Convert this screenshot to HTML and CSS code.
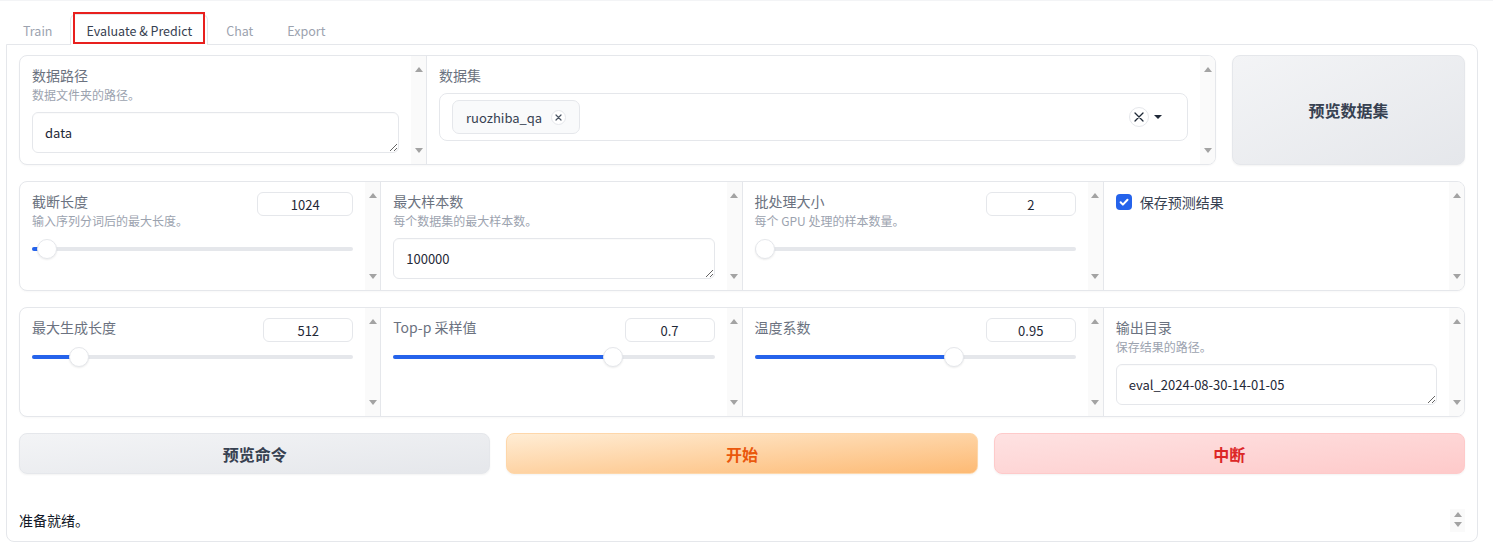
FILE: index.html
```html
<!doctype html>
<html lang="zh">
<head>
    <meta charset="UTF-8">
    <title>Evaluate &amp; Predict</title>
    <link rel="stylesheet" href="styles.css">
</head>
<body>
<div class="app">
    <div class="tabs">
        <button class="tab">Train</button>
        <button class="tab tab_selected">Evaluate &amp; Predict<span class="tab_mark"></span></button>
        <button class="tab">Chat</button>
        <button class="tab">Export</button>
    </div>
    <div class="panel">
        <div class="row">
            <div class="group">
                <div class="cell cell_path">
                    <div class="cell_body">
                        <span class="label">数据路径</span>
                        <span class="info">数据文件夹的路径。</span>
                        <textarea class="textbox" rows="1">data</textarea>
                    </div>
                    <div class="scroll"><span class="arrow_up"></span><span class="arrow_down"></span></div>
                </div>
                <div class="cell">
                    <div class="cell_body">
                        <span class="label">数据集</span>
                        <div class="dropdown">
                            <span class="token">ruozhiba_qa
                                <span class="token_remove">
                                    <svg width="7" height="7" viewBox="0 0 7 7"><path d="M1 1L6 6M6 1L1 6" stroke="#4b5563" stroke-width="1.2" stroke-linecap="round"/></svg>
                                </span>
                            </span>
                            <span class="dropdown_icons">
                                <span class="dropdown_clear">
                                    <svg width="10" height="10" viewBox="0 0 10 10"><path d="M1 1L9 9M9 1L1 9" stroke="#1f2937" stroke-width="1.3" stroke-linecap="round"/></svg>
                                </span>
                                <span class="dropdown_caret"></span>
                            </span>
                        </div>
                    </div>
                    <div class="scroll"><span class="arrow_up"></span><span class="arrow_down"></span></div>
                </div>
            </div>
            <button class="btn btn_secondary btn_preview">预览数据集</button>
        </div>

        <div class="row">
            <div class="group group_full">
                <div class="cell">
                    <div class="cell_body">
                        <div class="slider_head">
                            <div>
                                <span class="label">截断长度</span>
                                <span class="info">输入序列分词后的最大长度。</span>
                            </div>
                            <input class="num num_wide" type="number" value="1024">
                        </div>
                        <div class="range range_info">
                            <div class="track">
                                <div class="fill" style="width: 14.7px"></div>
                                <div class="thumb" style="left: 14.7px"></div>
                            </div>
                        </div>
                    </div>
                    <div class="scroll"><span class="arrow_up"></span><span class="arrow_down"></span></div>
                </div>
                <div class="cell">
                    <div class="cell_body">
                        <span class="label">最大样本数</span>
                        <span class="info">每个数据集的最大样本数。</span>
                        <textarea class="textbox" rows="1">100000</textarea>
                    </div>
                    <div class="scroll"><span class="arrow_up"></span><span class="arrow_down"></span></div>
                </div>
                <div class="cell">
                    <div class="cell_body">
                        <div class="slider_head">
                            <div>
                                <span class="label">批处理大小</span>
                                <span class="info">每个 GPU 处理的样本数量。</span>
                            </div>
                            <input class="num" type="number" value="2">
                        </div>
                        <div class="range range_info">
                            <div class="track">
                                <div class="fill" style="width: 0"></div>
                                <div class="thumb" style="left: 10px"></div>
                            </div>
                        </div>
                    </div>
                    <div class="scroll"><span class="arrow_up"></span><span class="arrow_down"></span></div>
                </div>
                <div class="cell">
                    <div class="cell_body">
                        <label class="check">
                            <span class="check_box">
                                <svg width="16" height="16" viewBox="0 0 16 16"><path d="M4.6 8.3l2.3 2.3 4.6-4.9" fill="none" stroke="#fff" stroke-width="2" stroke-linecap="round" stroke-linejoin="round"/></svg>
                            </span>
                            保存预测结果
                        </label>
                    </div>
                    <div class="scroll"><span class="arrow_up"></span><span class="arrow_down"></span></div>
                </div>
            </div>
        </div>

        <div class="row">
            <div class="group group_full">
                <div class="cell">
                    <div class="cell_body">
                        <div class="slider_head">
                            <span class="label">最大生成长度</span>
                            <input class="num" type="number" value="512">
                        </div>
                        <div class="range">
                            <div class="track">
                                <div class="fill" style="width: 47px"></div>
                                <div class="thumb" style="left: 47px"></div>
                            </div>
                        </div>
                    </div>
                    <div class="scroll"><span class="arrow_up"></span><span class="arrow_down"></span></div>
                </div>
                <div class="cell">
                    <div class="cell_body">
                        <div class="slider_head">
                            <span class="label">Top-p 采样值</span>
                            <input class="num" type="number" value="0.7">
                        </div>
                        <div class="range">
                            <div class="track">
                                <div class="fill" style="width: 219.8px"></div>
                                <div class="thumb" style="left: 219.8px"></div>
                            </div>
                        </div>
                    </div>
                    <div class="scroll"><span class="arrow_up"></span><span class="arrow_down"></span></div>
                </div>
                <div class="cell">
                    <div class="cell_body">
                        <div class="slider_head">
                            <span class="label">温度系数</span>
                            <input class="num" type="number" value="0.95">
                        </div>
                        <div class="range">
                            <div class="track">
                                <div class="fill" style="width: 199.9px"></div>
                                <div class="thumb" style="left: 199.9px"></div>
                            </div>
                        </div>
                    </div>
                    <div class="scroll"><span class="arrow_up"></span><span class="arrow_down"></span></div>
                </div>
                <div class="cell">
                    <div class="cell_body">
                        <span class="label">输出目录</span>
                        <span class="info">保存结果的路径。</span>
                        <textarea class="textbox" rows="1">eval_2024-08-30-14-01-05</textarea>
                    </div>
                    <div class="scroll"><span class="arrow_up"></span><span class="arrow_down"></span></div>
                </div>
            </div>
        </div>

        <div class="row btn_row">
            <button class="btn btn_secondary">预览命令</button>
            <button class="btn btn_primary">开始</button>
            <button class="btn btn_stop">中断</button>
        </div>

        <div class="status">
            <span class="status_text">准备就绪。</span>
            <div class="scroll scroll_small"><span class="arrow_up"></span><span class="arrow_down"></span></div>
        </div>
    </div>
</div>
</body>
</html>
```

FILE: styles.css
```css
* {
    box-sizing: border-box;
    margin: 0;
    padding: 0;
}

body {
    font-family: "Noto Sans CJK SC", "Noto Sans", sans-serif;
    font-size: 14px;
    color: #1f2937;
    background-color: #fff;
}

.app {
    border-top: 1px solid #f3f4f6;
    padding: 13px 15px 0 6px;
}

/* tabs */
.tabs {
    display: flex;
    gap: 2px;
    padding-left: 1px;
    margin-bottom: -1px;
}

.tab {
    position: relative;
    height: 31px;
    padding: 0 15px;
    border: 1px solid transparent;
    border-bottom: none;
    border-radius: 6px 6px 0 0;
    background: none;
    font: inherit;
    font-size: 12.5px;
    line-height: 29px;
    color: #9ca3af;
}

.tab_selected {
    z-index: 1;
    border-color: #e5e7eb;
    background-color: #fff;
    color: #374151;
}

.tab_mark {
    position: absolute;
    left: 2px;
    right: 2px;
    top: -3px;
    bottom: 1px;
    border: 2px solid #e8201e;
    pointer-events: none;
}

.panel {
    display: flex;
    flex-direction: column;
    gap: 16px;
    border: 1px solid #e5e7eb;
    border-radius: 0 8px 8px 8px;
    padding: 10px 12px 9px;
}

.row {
    display: flex;
    gap: 16px;
}

/* grouped blocks */
.group {
    flex: 1;
    display: flex;
    border: 1px solid #e5e7eb;
    border-radius: 8px;
    overflow: hidden;
    background-color: #fff;
    box-shadow: 0 1px 2px rgba(0, 0, 0, 0.03);
}

.cell {
    flex: 1;
    display: flex;
    min-width: 0;
}

.cell + .cell {
    border-left: 1px solid #e5e7eb;
}

.cell_path {
    flex: 0 0 406px;
}

.cell_body {
    flex: 1;
    min-width: 0;
    padding: 9px 12px 11px;
}

.scroll {
    flex: 0 0 15px;
    display: flex;
    flex-direction: column;
    justify-content: space-between;
    align-items: center;
    padding: 11px 0;
    background-color: #fafafa;
}

.arrow_up {
    width: 0;
    height: 0;
    border-left: 4px solid transparent;
    border-right: 4px solid transparent;
    border-bottom: 5px solid #a3a3a3;
}

.arrow_down {
    width: 0;
    height: 0;
    border-left: 4px solid transparent;
    border-right: 4px solid transparent;
    border-top: 5px solid #a3a3a3;
}

.label {
    display: block;
    line-height: 20px;
    color: #6b7280;
}

.info {
    display: block;
    margin-top: 1px;
    font-size: 12px;
    line-height: 18px;
    color: #9ca3af;
}

.textbox {
    display: block;
    width: 100%;
    height: 41px;
    margin-top: 8px;
    padding: 10px 12px;
    border: 1px solid #e5e7eb;
    border-radius: 6px;
    font: inherit;
    font-size: 13px;
    line-height: 20px;
    color: #1f2937;
    resize: vertical;
    overflow: hidden;
    outline: none;
    box-shadow: inset 0 1px 1px rgba(0, 0, 0, 0.02);
}

/* dropdown */
.dropdown {
    display: flex;
    justify-content: space-between;
    align-items: center;
    height: 48px;
    margin-top: 8px;
    padding: 6px 25px 6px 12px;
    border: 1px solid #e5e7eb;
    border-radius: 8px;
}

.token {
    display: inline-flex;
    align-items: center;
    gap: 9px;
    height: 34px;
    padding: 0 13px;
    border: 1px solid #e5e7eb;
    border-radius: 7px;
    background-color: #f9fafb;
    font-size: 13px;
    color: #374151;
}

.token_remove {
    display: flex;
    justify-content: center;
    align-items: center;
    width: 15px;
    height: 15px;
    border: 1px solid #e5e7eb;
    border-radius: 50%;
    background-color: #fff;
}

.dropdown_icons {
    display: flex;
    align-items: center;
    gap: 5px;
}

.dropdown_clear {
    display: flex;
    justify-content: center;
    align-items: center;
    width: 20px;
    height: 20px;
    border: 1px solid #e5e7eb;
    border-radius: 50%;
}

.dropdown_caret {
    width: 0;
    height: 0;
    border-left: 4px solid transparent;
    border-right: 4px solid transparent;
    border-top: 4px solid #1f2937;
}

/* sliders */
.slider_head {
    display: flex;
    justify-content: space-between;
    align-items: flex-start;
}

.num {
    width: 90px;
    height: 24px;
    margin-top: 1px;
    border: 1px solid #e5e7eb;
    border-radius: 6px;
    font: inherit;
    font-size: 13px;
    text-align: center;
    color: #1f2937;
    outline: none;
    -moz-appearance: textfield;
}

.num::-webkit-inner-spin-button,
.num::-webkit-outer-spin-button {
    -webkit-appearance: none;
    margin: 0;
}

.num_wide {
    width: 96px;
}

.range {
    display: flex;
    align-items: center;
    height: 20px;
    margin-top: 5px;
}

.range_info {
    margin-top: 9px;
}

.track {
    position: relative;
    width: 100%;
    height: 4px;
    border-radius: 2px;
    background-color: #e5e7eb;
}

.fill {
    height: 100%;
    border-radius: 2px;
    background-color: #2563eb;
}

.thumb {
    position: absolute;
    top: 50%;
    width: 20px;
    height: 20px;
    margin: -10px 0 0 -10px;
    border: 1px solid #e5e7eb;
    border-radius: 50%;
    background-color: #fff;
    box-shadow: 0 1px 2px rgba(0, 0, 0, 0.08);
}

/* checkbox */
.check {
    display: flex;
    align-items: center;
    gap: 8px;
    margin-top: 1px;
    line-height: 20px;
    color: #374151;
}

.check_box {
    display: flex;
    width: 16px;
    height: 16px;
    border-radius: 4px;
    background-color: #2563eb;
}

/* buttons */
.btn {
    border: 1px solid #e5e7eb;
    border-radius: 8px;
    font: inherit;
    font-size: 16px;
    font-weight: 700;
    cursor: pointer;
    box-shadow: 0 1px 2px rgba(0, 0, 0, 0.05);
}

.btn_row .btn {
    flex: 1;
    height: 41px;
}

.btn_preview {
    flex: 0 0 233px;
}

.btn_secondary {
    background: linear-gradient(to bottom right, #f3f4f6, #e5e7eb);
    color: #374151;
}

.btn_primary {
    border-color: #fed7aa;
    background: linear-gradient(to bottom right, #ffedd5, #fdba74);
    color: #ea580c;
}

.btn_stop {
    border-color: #fecaca;
    background: linear-gradient(to bottom right, #fee2e2, #fecaca);
    color: #dc2626;
}

/* status */
.status {
    display: flex;
    justify-content: space-between;
    align-items: flex-end;
    height: 42px;
}

.status_text {
    margin-bottom: 2px;
    line-height: 20px;
    color: #111827;
}

.scroll_small {
    flex: 0 0 auto;
    width: 15px;
    height: 23px;
    padding: 3px 0 5px;
}
```
